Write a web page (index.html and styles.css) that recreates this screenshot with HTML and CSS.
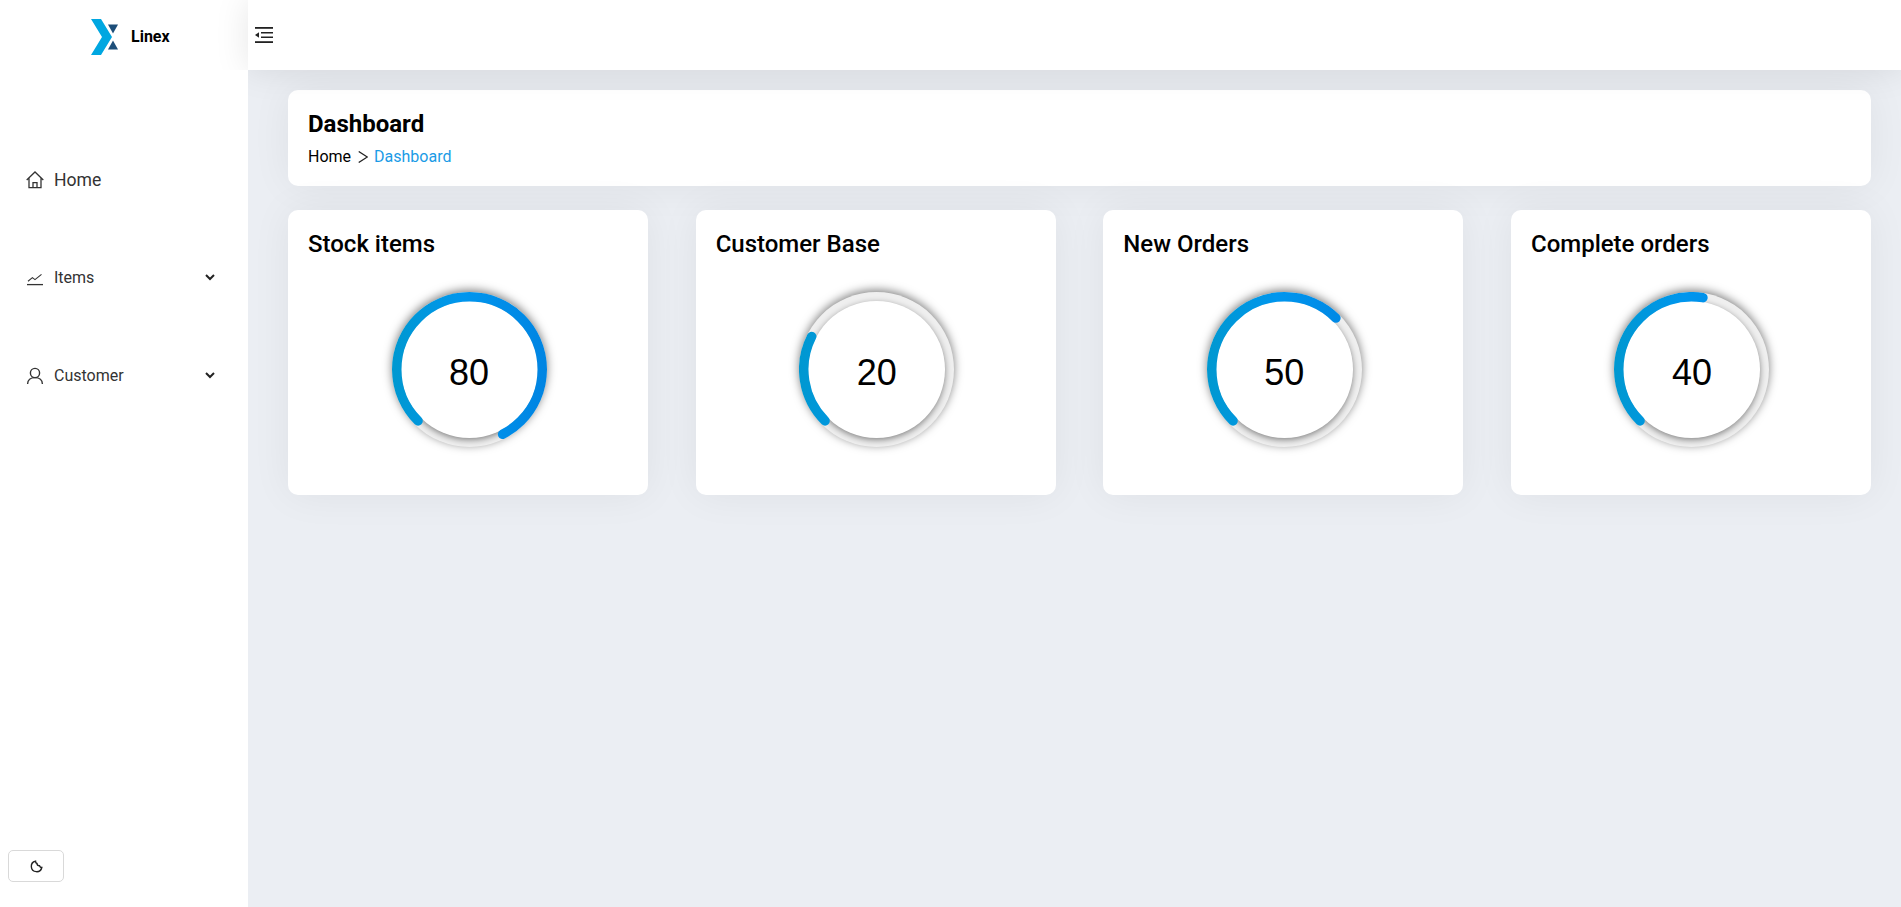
FILE: index.html
```html
<!DOCTYPE html>
<html lang="en">
<head>
  <meta charset="UTF-8">
  <meta name="viewport" content="width=device-width, initial-scale=1">
  <title>Linex Dashboard</title>
  <link rel="stylesheet" href="styles.css">
</head>
<body>
  <aside class="sidebar">
    <div class="logo">
      <svg class="logo-mark" width="27" height="36" viewBox="0 0 27 36">
        <polygon fill="#00a7e1" points="0,0 10,0 21,18 10,36 0,36 11,18"/>
        <polygon fill="#1d4e79" points="17,5.500 27,5.500 22,14.500"/>
        <polygon fill="#1d4e79" points="22,21.500 27,30.500 17,30.500"/>
      </svg>
      <span class="logo-name">Linex</span>
    </div>
    <nav class="nav">
      <a class="nav-item nav-home">
        <svg class="nav-icon" width="18" height="18" viewBox="0 0 18 18" fill="none" stroke="#333" stroke-width="1.3">
          <path d="M.7 9 9 1l8.300 8M3 7v9.600h12V7M7 16.600v-5h4v5"/>
        </svg>
        <span>Home</span>
      </a>
      <a class="nav-item">
        <svg class="nav-icon" width="18" height="18" viewBox="0 0 18 18" fill="none" stroke="#333" stroke-width="1.3">
          <path d="M1 15.600h16"/>
          <path d="M2 12.200 6.400 8.600l2.600 2L15.500 5.400" stroke-width="1.1"/>
        </svg>
        <span>Items</span>
        <svg class="nav-caret" width="10" height="7" viewBox="0 0 10 7" fill="none" stroke="#222" stroke-width="2"><path d="M1 1l4 4 4-4"/></svg>
      </a>
      <a class="nav-item">
        <svg class="nav-icon" width="18" height="18" viewBox="0 0 18 18" fill="none" stroke="#333" stroke-width="1.4">
          <circle cx="9" cy="6" r="4.600"/>
          <path d="M1.600 17c0-4 3-6.400 7.400-6.400s7.400 2.400 7.400 6.400"/>
        </svg>
        <span>Customer</span>
        <svg class="nav-caret" width="10" height="7" viewBox="0 0 10 7" fill="none" stroke="#222" stroke-width="2"><path d="M1 1l4 4 4-4"/></svg>
      </a>
    </nav>
    <div class="sidebar-foot">
      <button type="button" class="theme-btn">
        <svg width="13" height="13" viewBox="0 0 13 13" fill="none" stroke="#222" stroke-width="1.4">
          <path d="M5.500 1.200A5.300 5.300 0 1 0 11.800 7.500C10.500 7.500 9.800 6.800 9.500 5.800 8 5.800 7 5 7 3.500 6 3.200 5.500 2.200 5.500 1.200z"/>
        </svg>
      </button>
    </div>
  </aside>

  <div class="main">
    <header class="topbar">
      <svg width="18" height="16" viewBox="0 0 18 16" fill="#222">
        <rect x="0" y="0" width="18" height="1.800"/>
        <rect x="6" y="5" width="12" height="1.500"/>
        <rect x="6" y="9.500" width="12" height="1.500"/>
        <rect x="0" y="14.200" width="18" height="1.800"/>
        <polygon points="0,8 4,5.200 4,10.800"/>
      </svg>
    </header>

    <div class="content">
      <section class="page-title">
        <h1>Dashboard</h1>
        <div class="breadcrumb">
          <span>Home</span>
          <svg class="crumb-sep" width="10" height="12" viewBox="0 0 10 12" fill="none" stroke="#222" stroke-width="1.300"><path d="M.7.500 9.300 6 .7 11.500"/></svg>
          <span class="current">Dashboard</span>
        </div>
      </section>

      <div class="cards">
        <section class="card">
          <h2>Stock items</h2>
          <div class="gauge">
            <div class="gauge-inner">80</div>
            <svg class="gauge-arc" width="155" height="155" viewBox="0 0 155 155">
              <defs>
                <linearGradient id="arcFill" gradientUnits="userSpaceOnUse" x1="0" y1="77" x2="155" y2="77" gradientTransform="rotate(-135 77.5 77.5)">
                  <stop offset="0" stop-color="#0098d0"/>
                  <stop offset="0.45" stop-color="#0096ee"/>
                  <stop offset="1" stop-color="#0084e2"/>
                </linearGradient>
              </defs>
              <circle cx="77.5" cy="77.5" r="72.750" pathLength="100" stroke-dasharray="80 100" transform="rotate(135 77.5 77.5)"/>
            </svg>
          </div>
        </section>
        <section class="card">
          <h2>Customer Base</h2>
          <div class="gauge">
            <div class="gauge-inner">20</div>
            <svg class="gauge-arc" width="155" height="155" viewBox="0 0 155 155">
              <circle cx="77.5" cy="77.5" r="72.750" pathLength="100" stroke-dasharray="20 100" transform="rotate(135 77.5 77.5)"/>
            </svg>
          </div>
        </section>
        <section class="card">
          <h2>New Orders</h2>
          <div class="gauge">
            <div class="gauge-inner">50</div>
            <svg class="gauge-arc" width="155" height="155" viewBox="0 0 155 155">
              <circle cx="77.5" cy="77.5" r="72.750" pathLength="100" stroke-dasharray="50 100" transform="rotate(135 77.5 77.5)"/>
            </svg>
          </div>
        </section>
        <section class="card">
          <h2>Complete orders</h2>
          <div class="gauge">
            <div class="gauge-inner">40</div>
            <svg class="gauge-arc" width="155" height="155" viewBox="0 0 155 155">
              <circle cx="77.5" cy="77.5" r="72.750" pathLength="100" stroke-dasharray="40 100" transform="rotate(135 77.5 77.5)"/>
            </svg>
          </div>
        </section>
      </div>
    </div>
  </div>
</body>
</html>
```

FILE: styles.css
```css
/* Reset some defaults */
body, h1, h2 { margin: 0; padding: 0; box-sizing: border-box; }

body {
  font-family: Roboto, Arial, sans-serif;
  background: #ebeef3;
  height: 100vh;
  display: flex;
  overflow: hidden;
  color: #000;
}

/* Sidebar */
.sidebar {
  width: 248px;
  flex-shrink: 0;
  background: #fff;
  display: flex;
  flex-direction: column;
}

.logo {
  height: 70px;
  display: flex;
  align-items: center;
  padding-left: 91px;
  box-sizing: border-box;
}

.logo-mark {
  margin-top: 4px;
}

.logo-name {
  margin-left: 13px;
  font-size: 16px;
  font-weight: 700;
  margin-top: 3px;
}

.nav {
  position: relative;
  z-index: 2;
  background: #fff;
  padding-top: 61px;
}

.nav-item {
  height: 98px;
  box-sizing: border-box;
  display: flex;
  align-items: center;
  padding: 0 0 1px 26px;
  font-size: 16px;
  color: #333;
}

.nav-home {
  padding-bottom: 0;
  font-size: 17.6px;
}

.nav-icon {
  margin-right: 10px;
}

.nav-caret {
  margin-left: auto;
  margin-right: 33px;
}

.sidebar-foot {
  position: relative;
  z-index: 2;
  background: #fff;
  flex: 1;
  display: flex;
  align-items: flex-end;
  padding: 0 0 25px 8px;
}

.theme-btn {
  width: 56px;
  height: 32px;
  background: #fff;
  border: 1px solid #d9d9d9;
  border-radius: 5px;
  padding: 0;
  display: flex;
  align-items: center;
  justify-content: center;
}

/* Main area */
.main {
  flex: 1;
  min-width: 0;
  display: flex;
  flex-direction: column;
}

.topbar {
  position: relative;
  z-index: 1;
  height: 70px;
  flex-shrink: 0;
  background: #fff;
  display: flex;
  align-items: center;
  padding-left: 7px;
  box-shadow: 0 0 35px rgba(0,0,0,0.1);
}

.content {
  padding: 20px 30px 0 40px;
}

.page-title, .card {
  background: #fff;
  border-radius: 10px;
  box-shadow: 0 0 40px rgba(0,0,0,0.06);
}

.page-title {
  height: 96px;
  padding: 20px;
  box-sizing: border-box;
}

.page-title h1 {
  font-size: 24px;
  font-weight: 700;
  line-height: 28px;
}

.breadcrumb {
  display: flex;
  align-items: center;
  margin-top: 9px;
  font-size: 16px;
  line-height: 19px;
}

.crumb-sep {
  margin: 0 6px 0 7px;
}

.breadcrumb .current {
  color: #1a9be6;
}

.cards {
  display: flex;
  justify-content: space-between;
  margin-top: 24px;
}

.card {
  width: 360px;
  height: 285px;
  padding: 20px 18px 20px 20px;
  box-sizing: border-box;
}

.card h2 {
  font-size: 24px;
  font-weight: 500;
  line-height: 28px;
}

/* Progress rings */
.gauge {
  position: relative;
  width: 155px;
  height: 155px;
  margin: 34px auto 0;
  border-radius: 50%;
  background: #efefef;
  box-shadow: 0 -2px 10px rgba(0,0,0,0.5);
}

.gauge-inner {
  position: absolute;
  inset: 9px;
  padding-top: 7px;
  box-sizing: border-box;
  border-radius: 50%;
  background: #fff;
  box-shadow: 0 2px 6px rgba(0,0,0,0.45);
  display: flex;
  align-items: center;
  justify-content: center;
  font-family: "Liberation Sans", Arial, sans-serif;
  font-size: 36px;
}

.gauge-arc {
  position: absolute;
  top: 0;
  left: 0;
}

.gauge-arc circle {
  fill: none;
  stroke: url(#arcFill);
  stroke-width: 9.5;
  stroke-linecap: round;
}
```
